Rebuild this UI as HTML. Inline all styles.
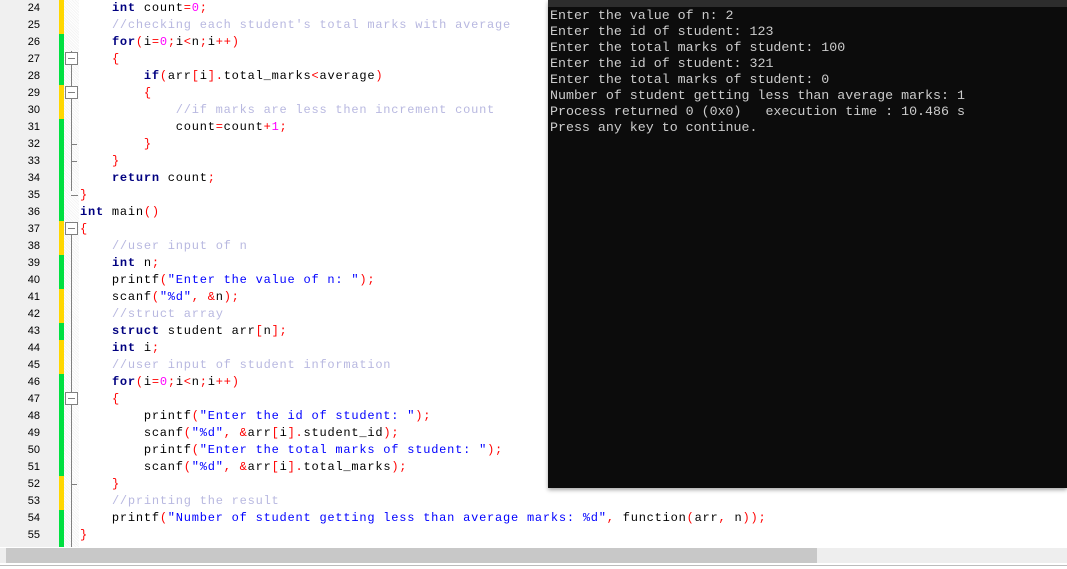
<!DOCTYPE html>
<html><head><meta charset="utf-8"><style>
*{margin:0;padding:0;box-sizing:border-box}
body{width:1067px;height:569px;background:#fff;position:relative;overflow:hidden;font-family:"Liberation Mono",monospace}
.gut{position:absolute;left:0;top:0;width:59px;height:547px;background:#f0f0f0}
.fold{position:absolute;left:64px;top:0;width:15px;height:547px;background:repeating-linear-gradient(45deg,#f4f4f4 0 1px,#fff 1px 2px)}
.ln{position:absolute;left:0;width:40px;text-align:right;font-family:"Liberation Sans",Arial,sans-serif;font-size:11px;color:#000;height:17px;line-height:17px}
.bar{position:absolute;left:59px;width:5px;height:17px}
.y{background:#ffd700}.g{background:#00e040}
.code{position:absolute;left:80px;height:17px;line-height:17px;font-size:12px;letter-spacing:0.78px;white-space:pre;color:#000}
.k{color:#000080;font-weight:bold}.s{color:#0000ff}.c{color:#b8b8e0}.o{color:#ff0000}.n{color:#ff00ff}
.vl{position:absolute;left:71px;width:1px;background:#808080}
.box{position:absolute;left:65px;width:13px;height:13px;border:1px solid #808080;background:#fff}
.box:after{content:"";position:absolute;left:2px;top:5px;width:7px;height:1px;background:#808080}
.tk{position:absolute;left:71px;width:6px;height:1px;background:#808080}
.con{position:absolute;left:548px;top:0;width:519px;height:488px;background:#0c0c0c;box-shadow:0 2px 4px rgba(0,0,0,.35)}
.con .top{height:7px;background:#2d2d2d}
.con pre{font-family:"Liberation Mono","DejaVu Sans Mono",monospace;font-size:13.3px;line-height:16px;color:#cccccc;padding:1px 0 0 2px}
.sb{position:absolute;left:0;top:548px;width:1067px;height:15px;background:#eeeeee}
.th{position:absolute;left:6px;top:548px;width:811px;height:15px;background:#c8c8c8}
.bl{position:absolute;left:0;top:565px;width:1067px;height:1px;background:#bcbcbc}
</style></head><body>
<div class="gut"></div><div class="fold"></div>
<div class="vl" style="top:51px;height:140px"></div>
<div class="vl" style="top:232px;height:315px"></div>
<div class="box" style="top:52px"></div>
<div class="box" style="top:86px"></div>
<div class="box" style="top:222px"></div>
<div class="box" style="top:392px"></div>
<div class="tk" style="top:144px"></div>
<div class="tk" style="top:161px"></div>
<div class="tk" style="top:195px;width:7px"></div>
<div class="tk" style="top:484px"></div>

<div class="ln" style="top:0">24</div><div class="ln" style="top:17px">25</div><div class="ln" style="top:34px">26</div><div class="ln" style="top:51px">27</div><div class="ln" style="top:68px">28</div><div class="ln" style="top:85px">29</div><div class="ln" style="top:102px">30</div><div class="ln" style="top:119px">31</div><div class="ln" style="top:136px">32</div><div class="ln" style="top:153px">33</div><div class="ln" style="top:170px">34</div><div class="ln" style="top:187px">35</div><div class="ln" style="top:204px">36</div><div class="ln" style="top:221px">37</div><div class="ln" style="top:238px">38</div><div class="ln" style="top:255px">39</div><div class="ln" style="top:272px">40</div><div class="ln" style="top:289px">41</div><div class="ln" style="top:306px">42</div><div class="ln" style="top:323px">43</div><div class="ln" style="top:340px">44</div><div class="ln" style="top:357px">45</div><div class="ln" style="top:374px">46</div><div class="ln" style="top:391px">47</div><div class="ln" style="top:408px">48</div><div class="ln" style="top:425px">49</div><div class="ln" style="top:442px">50</div><div class="ln" style="top:459px">51</div><div class="ln" style="top:476px">52</div><div class="ln" style="top:493px">53</div><div class="ln" style="top:510px">54</div><div class="ln" style="top:527px">55</div>

<div class="bar y" style="top:0;height:34px"></div>
<div class="bar g" style="top:34px;height:51px"></div>
<div class="bar y" style="top:85px;height:34px"></div>
<div class="bar g" style="top:119px;height:102px"></div>
<div class="bar y" style="top:221px;height:34px"></div>
<div class="bar g" style="top:255px;height:34px"></div>
<div class="bar y" style="top:289px;height:34px"></div>
<div class="bar g" style="top:323px;height:17px"></div>
<div class="bar y" style="top:340px;height:34px"></div>
<div class="bar g" style="top:374px;height:102px"></div>
<div class="bar y" style="top:476px;height:34px"></div>
<div class="bar g" style="top:510px;height:37px"></div>

<div class="code" style="top:0">    <span class="k">int</span> count<span class="o">=</span><span class="n">0</span><span class="o">;</span></div>
<div class="code" style="top:17px">    <span class="c">//checking each student's total marks with average</span></div>
<div class="code" style="top:34px">    <span class="k">for</span><span class="o">(</span>i<span class="o">=</span><span class="n">0</span><span class="o">;</span>i<span class="o">&lt;</span>n<span class="o">;</span>i<span class="o">++)</span></div>
<div class="code" style="top:51px">    <span class="o">{</span></div>
<div class="code" style="top:68px">        <span class="k">if</span><span class="o">(</span>arr<span class="o">[</span>i<span class="o">].</span>total_marks<span class="o">&lt;</span>average<span class="o">)</span></div>
<div class="code" style="top:85px">        <span class="o">{</span></div>
<div class="code" style="top:102px">            <span class="c">//if marks are less then increment count</span></div>
<div class="code" style="top:119px">            count<span class="o">=</span>count<span class="o">+</span><span class="n">1</span><span class="o">;</span></div>
<div class="code" style="top:136px">        <span class="o">}</span></div>
<div class="code" style="top:153px">    <span class="o">}</span></div>
<div class="code" style="top:170px">    <span class="k">return</span> count<span class="o">;</span></div>
<div class="code" style="top:187px"><span class="o">}</span></div>
<div class="code" style="top:204px"><span class="k">int</span> main<span class="o">()</span></div>
<div class="code" style="top:221px"><span class="o">{</span></div>
<div class="code" style="top:238px">    <span class="c">//user input of n</span></div>
<div class="code" style="top:255px">    <span class="k">int</span> n<span class="o">;</span></div>
<div class="code" style="top:272px">    printf<span class="o">(</span><span class="s">"Enter the value of n: "</span><span class="o">);</span></div>
<div class="code" style="top:289px">    scanf<span class="o">(</span><span class="s">"%d"</span><span class="o">,</span> <span class="o">&amp;</span>n<span class="o">);</span></div>
<div class="code" style="top:306px">    <span class="c">//struct array</span></div>
<div class="code" style="top:323px">    <span class="k">struct</span> student arr<span class="o">[</span>n<span class="o">];</span></div>
<div class="code" style="top:340px">    <span class="k">int</span> i<span class="o">;</span></div>
<div class="code" style="top:357px">    <span class="c">//user input of student information</span></div>
<div class="code" style="top:374px">    <span class="k">for</span><span class="o">(</span>i<span class="o">=</span><span class="n">0</span><span class="o">;</span>i<span class="o">&lt;</span>n<span class="o">;</span>i<span class="o">++)</span></div>
<div class="code" style="top:391px">    <span class="o">{</span></div>
<div class="code" style="top:408px">        printf<span class="o">(</span><span class="s">"Enter the id of student: "</span><span class="o">);</span></div>
<div class="code" style="top:425px">        scanf<span class="o">(</span><span class="s">"%d"</span><span class="o">,</span> <span class="o">&amp;</span>arr<span class="o">[</span>i<span class="o">].</span>student_id<span class="o">);</span></div>
<div class="code" style="top:442px">        printf<span class="o">(</span><span class="s">"Enter the total marks of student: "</span><span class="o">);</span></div>
<div class="code" style="top:459px">        scanf<span class="o">(</span><span class="s">"%d"</span><span class="o">,</span> <span class="o">&amp;</span>arr<span class="o">[</span>i<span class="o">].</span>total_marks<span class="o">);</span></div>
<div class="code" style="top:476px">    <span class="o">}</span></div>
<div class="code" style="top:493px">    <span class="c">//printing the result</span></div>
<div class="code" style="top:510px">    printf<span class="o">(</span><span class="s">"Number of student getting less than average marks: %d"</span><span class="o">,</span> function<span class="o">(</span>arr<span class="o">,</span> n<span class="o">));</span></div>
<div class="code" style="top:527px"><span class="o">}</span></div>

<div class="con"><div class="top"></div><pre>Enter the value of n: 2
Enter the id of student: 123
Enter the total marks of student: 100
Enter the id of student: 321
Enter the total marks of student: 0
Number of student getting less than average marks: 1
Process returned 0 (0x0)   execution time : 10.486 s
Press any key to continue.</pre></div>

<div class="sb"></div><div class="th"></div><div class="bl"></div>
</body></html>
